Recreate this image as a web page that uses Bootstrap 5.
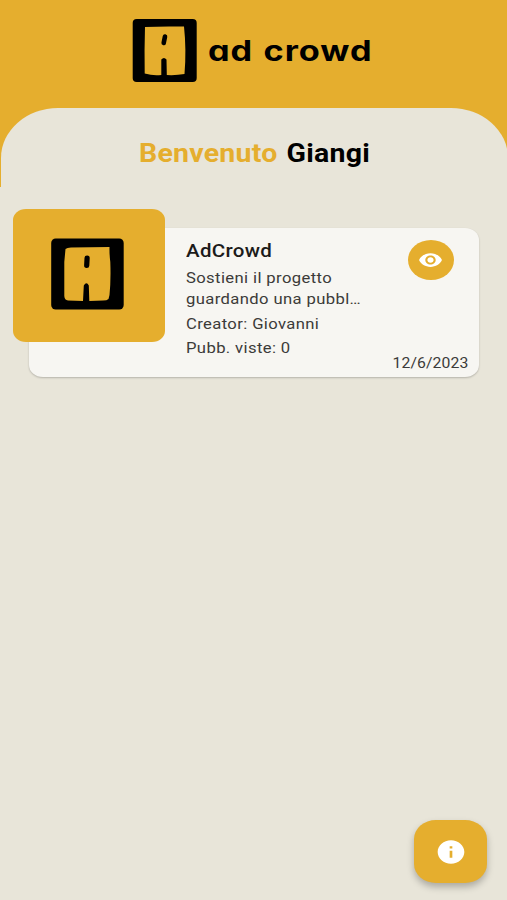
<!DOCTYPE html>
<html lang="it">
<head>
<meta charset="utf-8">
<meta name="viewport" content="width=device-width, initial-scale=1">
<title>ad crowd</title>
<link href="https://cdn.jsdelivr.net/npm/bootstrap@5.3.0/dist/css/bootstrap.min.css" rel="stylesheet">
<style>
  :root { --gold: #e5ae2e; --sand: #e8e5d9; --paper: #f7f6f2; }
  body { font-family: Roboto, "Liberation Sans", sans-serif; background: var(--sand); color: #000; }
  .screen { height: 900px; background: linear-gradient(var(--gold) 187px, var(--sand) 187px); }
  .brand-bar { height: 108px; padding: 19px 0 0 132px; }
  .brand-logo { width: 65px; height: 63px; }
  .wide { display: inline-block; white-space: nowrap; transform-origin: 0 50%; transform: scaleX(1.14); }
  .wordmark { font: 700 28px/30px Inter, "Open Sans", sans-serif; font-feature-settings: "cv11"; letter-spacing: .8px; word-spacing: 1px; margin: 17px 0 0 11px; transform: scaleX(1.225); }
  .sheet { height: 792px; margin: 0 -1px 0 1px; background: var(--sand); border-radius: 57px 57px 0 0 / 50px 50px 0 0; }
  .greeting { font-size: 25px; line-height: 30px; font-weight: 700; letter-spacing: .2px; word-spacing: 1.5px; padding: 31px 0 0 138px; margin: 0; }
  .gold-text { color: var(--gold); }
  .project-row { margin: 40px 0 0 12.4px; }
  .thumb { width: 152px; height: 133px; border-radius: 13px / 11px; background: var(--gold); z-index: 1; padding: 29px 0 0 37.6px; }
  .thumb svg { width: 73px; height: 72px; display: block; }
  .project { width: 450px; height: 149px; margin: 19px 0 0 -136.4px; padding: 11px 10.5px 0 157px; background: var(--paper); border: 0; border-radius: 14px / 12px; box-shadow: 0 1px 2px rgba(0,0,0,.22); }
  .project-name { font-size: 18px; line-height: 24px; font-weight: 500; letter-spacing: .25px; color: #1c1b1a; margin: 0; }
  .line { font-size: 14.6px; line-height: 21.5px; color: #3c3b39; letter-spacing: .33px; }
  .blurb { margin-top: 4.5px; }
  .fact { margin-top: 3px; }
  .view-btn { width: 46px; height: 40px; border-radius: 50%; background: var(--gold); padding: 0; border: 0; margin: 1px 15px 0 0; }
  .date { font-size: 14.2px; line-height: 20px; color: #3c3b39; letter-spacing: .1px; transform-origin: 100% 50%; transform: scaleX(1.11); margin-bottom: 4px; }
  .info-btn { width: 73px; height: 63px; right: 20px; top: 820px; border: 0; padding: 0; border-radius: 22px / 19px; background: var(--gold); box-shadow: 0 4px 7px rgba(0,0,0,.26); }
</style>
</head>
<body>
<main class="screen position-relative overflow-hidden">
  <header class="brand-bar d-flex align-items-start">
    <svg class="brand-logo flex-shrink-0" viewBox="0 0 65 63" aria-hidden="true">
      <rect x=".7" width="64" height="63" rx="4"/>
      <path fill="#e5ae2e" d="M13 8Q32 7 52 7.600Q54.500 31 52.500 55Q44 56.500 34.800 56L34.500 40.500Q32 37.500 29.300 40.500L29.300 56Q21 57 12.700 54.500Q12.300 30 13 8Z"/>
      <path d="M33 17.500L31.700 24" stroke="#000" stroke-width="4.600" stroke-linecap="round"/>
    </svg>
    <span class="wordmark wide">ad crowd</span>
  </header>
  <section class="sheet">
    <h1 class="greeting"><span class="wide"><span class="gold-text">Benvenuto</span> Giangi</span></h1>
    <div class="project-row d-flex align-items-start">
      <div class="thumb flex-shrink-0 position-relative">
        <svg viewBox="0 0 73 72" aria-hidden="true">
          <rect x=".2" y=".5" width="72.500" height="71" rx="4.500"/>
          <path fill="#e5ae2e" d="M14.500 11Q16 9.500 20 9.500L58.500 9Q58.300 16 59.300 24Q60 42 58.500 57L57.500 61Q56 62.500 52 62.500L38.300 63L37.800 47.500Q35.500 42.800 32.800 47.500L32 63L17 62.500Q13.500 62 13.300 58L13.300 24Z"/>
          <path d="M36.100 20L35.700 27.500" stroke="#000" stroke-width="5.200" stroke-linecap="round"/>
        </svg>
      </div>
      <article class="project card flex-row flex-shrink-0 justify-content-between">
        <div>
          <h2 class="project-name"><span class="wide">AdCrowd</span></h2>
          <div class="line blurb"><span class="wide">Sostieni il progetto<br>guardando una pubbl…</span></div>
          <div class="line fact"><span class="wide">Creator: Giovanni</span></div>
          <div class="line fact"><span class="wide">Pubb. viste: 0</span></div>
        </div>
        <div class="d-flex flex-column align-items-end justify-content-between">
          <button class="view-btn btn d-flex align-items-center justify-content-center" aria-label="Guarda">
            <svg width="25" height="22" viewBox="0 0 24 24" preserveAspectRatio="none" fill="#fff"><path d="M12 4.500C7 4.500 2.730 7.610 1 12c1.730 4.390 6 7.500 11 7.500s9.270-3.110 11-7.500c-1.730-4.390-6-7.500-11-7.500zM12 17c-2.760 0-5-2.240-5-5s2.240-5 5-5 5 2.240 5 5-2.240 5-5 5zm0-8c-1.660 0-3 1.340-3 3s1.340 3 3 3 3-1.340 3-3-1.340-3-3-3z"/></svg>
          </button>
          <span class="date wide">12/6/2023</span>
        </div>
      </article>
    </div>
  </section>
  <button class="info-btn btn position-absolute d-flex align-items-center justify-content-center" aria-label="Informazioni">
    <svg width="32" height="28" viewBox="0 0 24 24" preserveAspectRatio="none" fill="#fff"><path d="M12 2C6.480 2 2 6.480 2 12s4.480 10 10 10 10-4.480 10-10S17.520 2 12 2zm1 15h-2v-6h2v6zm0-8h-2V7h2v2z"/></svg>
  </button>
</main>
<script src="https://cdn.jsdelivr.net/npm/bootstrap@5.3.0/dist/js/bootstrap.bundle.min.js"></script>
</body>
</html>
